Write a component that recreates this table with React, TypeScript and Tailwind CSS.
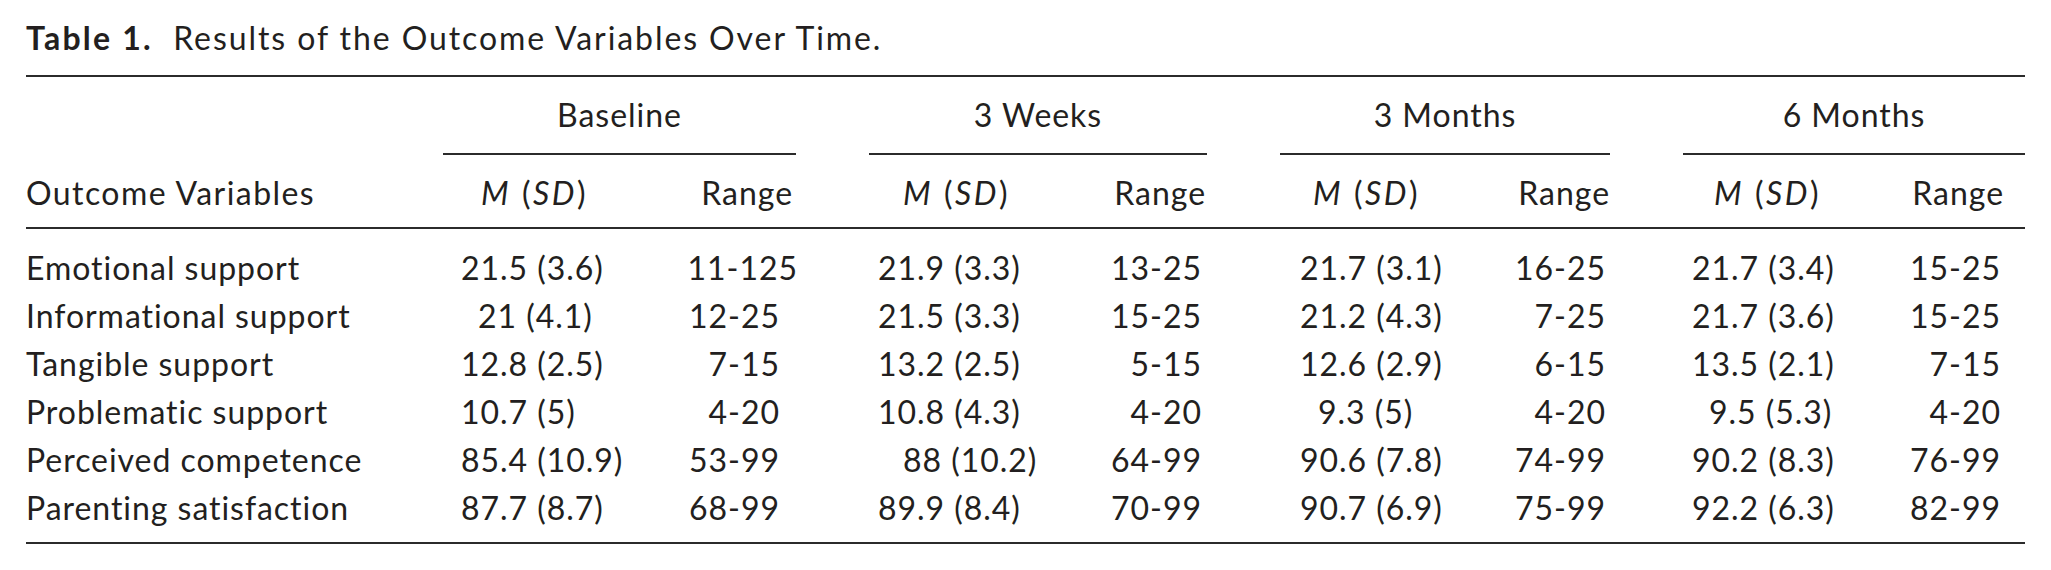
type Cell = { m: string; r: string; mi?: string; ri?: string };

const groups = [
  { name: 'Baseline', w: 'w-[353px]', mHead: 'pl-[38px]', rHead: 'pr-[3px]', mData: 'pl-[18px]', rData: 'pr-[16px]' },
  { name: '3 Weeks', w: 'w-[338px]', mHead: 'pl-[34px]', rHead: 'pr-[1px]', mData: 'pl-[9px]', rData: 'pr-[5px]' },
  { name: '3 Months', w: 'w-[330px]', mHead: 'pl-[33px]', rHead: 'pr-0', mData: 'pl-[20px]', rData: 'pr-[4px]' },
  { name: '6 Months', w: 'w-[342px]', mHead: 'pl-[31px]', rHead: 'pr-[21px]', mData: 'pl-[9px]', rData: 'pr-[24px]' },
];

const rows: { label: string; cells: Cell[] }[] = [
  {
    label: 'Emotional support',
    cells: [
      { m: '21.5 (3.6)', r: '11-125', ri: '-mr-[18px]' },
      { m: '21.9 (3.3)', r: '13-25' },
      { m: '21.7 (3.1)', r: '16-25' },
      { m: '21.7 (3.4)', r: '15-25' },
    ],
  },
  {
    label: 'Informational support',
    cells: [
      { m: '21 (4.1)', r: '12-25', mi: 'ml-[17px]' },
      { m: '21.5 (3.3)', r: '15-25' },
      { m: '21.2 (4.3)', r: '7-25' },
      { m: '21.7 (3.6)', r: '15-25' },
    ],
  },
  {
    label: 'Tangible support',
    cells: [
      { m: '12.8 (2.5)', r: '7-15' },
      { m: '13.2 (2.5)', r: '5-15' },
      { m: '12.6 (2.9)', r: '6-15' },
      { m: '13.5 (2.1)', r: '7-15' },
    ],
  },
  {
    label: 'Problematic support',
    cells: [
      { m: '10.7 (5)', r: '4-20' },
      { m: '10.8 (4.3)', r: '4-20' },
      { m: '9.3 (5)', r: '4-20', mi: 'ml-[18px]' },
      { m: '9.5 (5.3)', r: '4-20', mi: 'ml-[17px]' },
    ],
  },
  {
    label: 'Perceived competence',
    cells: [
      { m: '85.4 (10.9)', r: '53-99' },
      { m: '88 (10.2)', r: '64-99', mi: 'ml-[25px]' },
      { m: '90.6 (7.8)', r: '74-99' },
      { m: '90.2 (8.3)', r: '76-99' },
    ],
  },
  {
    label: 'Parenting satisfaction',
    cells: [
      { m: '87.7 (8.7)', r: '68-99' },
      { m: '89.9 (8.4)', r: '70-99' },
      { m: '90.7 (6.9)', r: '75-99' },
      { m: '92.2 (6.3)', r: '82-99' },
    ],
  },
];

function MSD() {
  return (
    <span className="tracking-[0.08em]">
      <i>M</i> (<i>SD</i>)
    </span>
  );
}

export default function App() {
  return (
    <div className="min-h-[570px] w-[2051px] bg-white pt-[18px] pl-[26px] font-['Lato',sans-serif] text-[32px] tracking-[0.03em] text-[#231f20]">
      <div className="w-[1999px]">
        <p className="leading-[40px] tracking-[0.06em]">
          <span className="font-bold tracking-[0.07em]">Table 1.</span>&nbsp;&nbsp;Results of the Outcome Variables Over Time.
        </p>

        <div className="mt-[17px] border-t-2 border-[#2b2b2b]">
          {/* group headers */}
          <div className="flex gap-x-[73px]">
            <div className="w-[344px]" />
            {groups.map((g) => (
              <div key={g.name} className={`${g.w} border-b-2 border-[#2b2b2b] pt-[18px] pb-[18px] text-center leading-[40px]`}>
                {g.name}
              </div>
            ))}
          </div>

          {/* column headers */}
          <div className="flex gap-x-[73px] border-b-2 border-[#2b2b2b] pt-[18px] pb-[14px] leading-[40px]">
            <div className="w-[344px] whitespace-nowrap tracking-[0.045em]">Outcome Variables</div>
            {groups.map((g) => (
              <div key={g.name} className={`${g.w} flex justify-between whitespace-nowrap`}>
                <span className={g.mHead}>
                  <MSD />
                </span>
                <span className={g.rHead}>Range</span>
              </div>
            ))}
          </div>

          {/* body */}
          <div className="border-b-2 border-[#2b2b2b] pt-[15px] pb-[10px]">
            {rows.map((row) => (
              <div key={row.label} className="flex h-[48px] items-center gap-x-[73px] leading-[48px]">
                <div className="w-[344px] whitespace-nowrap">{row.label}</div>
                {row.cells.map((c, i) => (
                  <div key={i} className={`${groups[i].w} flex justify-between whitespace-nowrap`}>
                    <span className={groups[i].mData}>
                      <span className={c.mi}>{c.m}</span>
                    </span>
                    <span className={`${groups[i].rData} ${c.ri ?? ''}`}>{c.r}</span>
                  </div>
                ))}
              </div>
            ))}
          </div>
        </div>
      </div>
    </div>
  );
}
